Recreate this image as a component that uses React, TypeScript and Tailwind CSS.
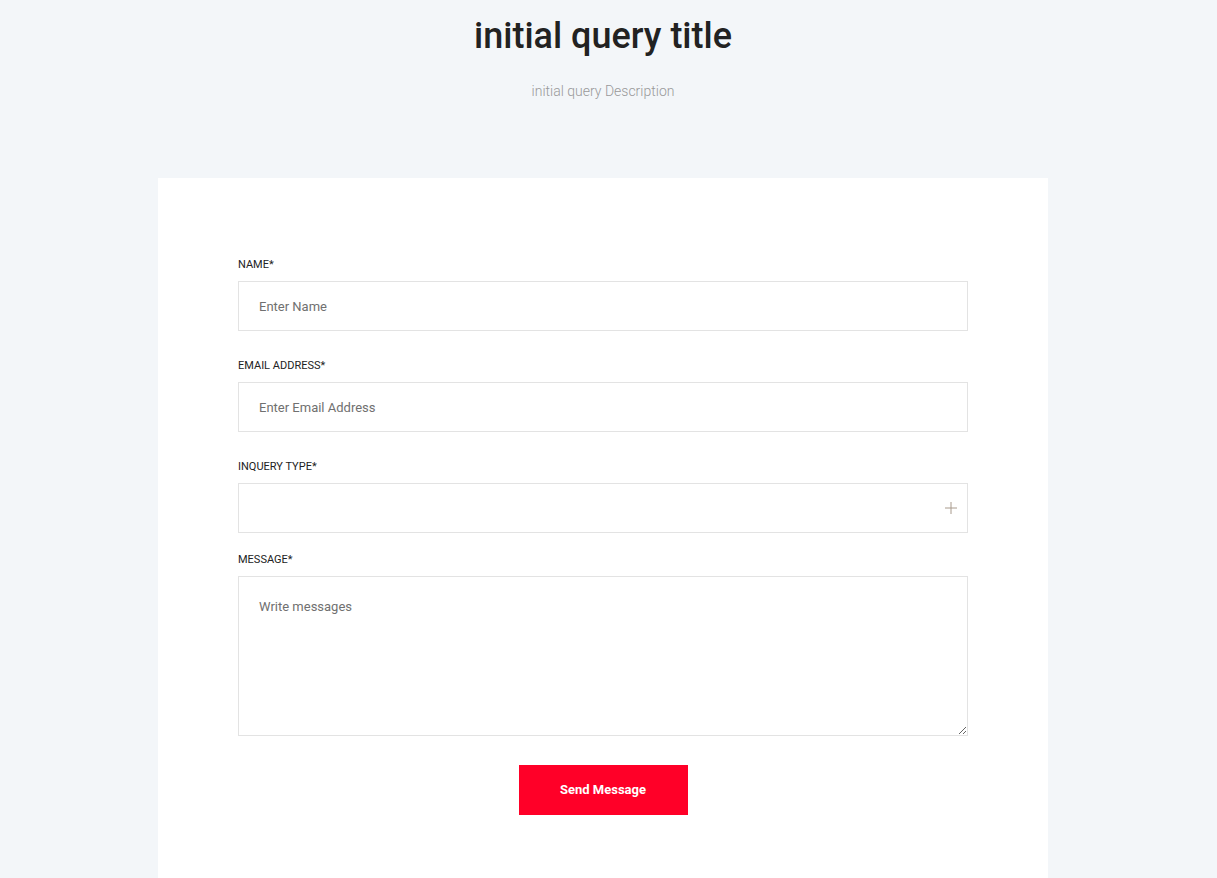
import React from 'react';

const Label = ({ children }: { children: React.ReactNode }) => (
  <label className="block text-[11px] leading-[13px] uppercase text-[#222] mb-[10px]">{children}</label>
);

const inputCls =
  'block w-full h-[50px] border border-[#e3e3e3] bg-white px-5 text-[13px] text-[#333] placeholder:text-[#707070] outline-none';

const App: React.FC = () => {
  return (
    <div className="min-h-[878px] bg-[#f3f6f9] pr-[11px] font-['Roboto',sans-serif]">
      <div className="pt-[13px] text-center">
        <h1 className="text-[36px] leading-[46px] font-medium text-[#222]">initial query title</h1>
        <p className="mt-[23px] text-[14px] leading-[18px] font-light text-[#999]">initial query Description</p>
      </div>
      <div className="mx-auto mt-[78px] w-[890px] bg-white px-[80px] pt-[80px] pb-[63px]">
        <form onSubmit={e => e.preventDefault()}>
          <Label>Name*</Label>
          <input className={inputCls} placeholder="Enter Name" />
          <div className="mt-[28px]">
            <Label>Email Address*</Label>
            <input className={inputCls} placeholder="Enter Email Address" />
          </div>
          <div className="mt-[28px]">
            <Label>Inquery Type*</Label>
            <div className="relative">
              <div className={inputCls} />
              <svg className="absolute right-[11px] top-[19px]" width="12" height="12" viewBox="0 0 12 12">
                <path d="M6 0v12M0 6h12" stroke="#a89a8c" strokeWidth="1" />
              </svg>
            </div>
          </div>
          <div className="mt-[20px]">
            <Label>Message*</Label>
            <textarea
              className="block w-full h-[160px] border border-[#e3e3e3] bg-white px-5 py-[22px] text-[13px] leading-[16px] text-[#333] placeholder:text-[#707070] outline-none"
              placeholder="Write messages"
            />
          </div>
          <div className="mt-[29px] flex justify-center">
            <button className="h-[50px] w-[169px] bg-[#ff0028] text-[13px] font-bold text-white">Send Message</button>
          </div>
        </form>
      </div>
    </div>
  );
};

export default App;
